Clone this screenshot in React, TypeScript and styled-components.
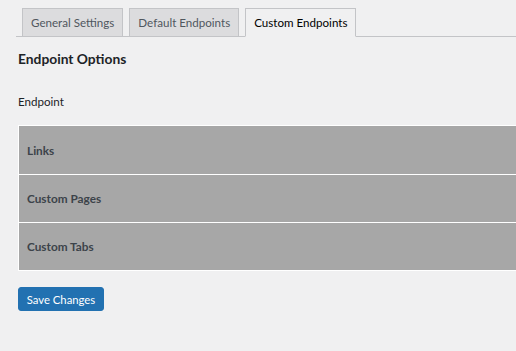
import React from "react";
import styled, { createGlobalStyle } from "styled-components";

const Global = createGlobalStyle`
  html, body { margin: 0; padding: 0; background: #f0f0f1; }
  body { font-family: "Lato", "Open Sans", sans-serif; color: #3c434a; font-size: 12px; overflow: hidden; }
`;

const Wrap = styled.div`
  padding: 8px 0 0 16px;
`;

const TabBar = styled.nav`
  display: flex;
  align-items: flex-end;
  gap: 6px;
  padding-left: 6px;
  border-bottom: 1px solid #c3c4c7;
  height: 28px;
`;

const Tab = styled.a<{ $active?: boolean }>`
  display: flex;
  align-items: center;
  box-sizing: border-box;
  height: ${(p) => (p.$active ? "29px" : "28px")};
  margin-bottom: ${(p) => (p.$active ? "-1px" : "0")};
  padding: 0 8px;
  border: 1px solid #c3c4c7;
  border-bottom: ${(p) => (p.$active ? "1px solid #f0f0f1" : "none")};
  background: ${(p) => (p.$active ? "#f0f0f1" : "#dcdcde")};
  color: ${(p) => (p.$active ? "#000" : "#50575e")};
  font-size: 11.6px;
  font-weight: 400;
  text-decoration: none;
  white-space: nowrap;
`;

const Content = styled.div`
  padding-left: 2px;
`;

const Heading = styled.h2`
  margin: 12px 0 0;
  font-size: 13.8px;
  font-weight: 700;
  color: #1d2327;
  line-height: 20px;
`;

const Label = styled.div`
  margin-top: 24px;
  font-size: 11.6px;
  color: #1d2327;
  line-height: 18px;
`;

const Table = styled.div`
  margin-top: 14px;
  border-top: 1px solid #fff;
  border-left: 1px solid #fff;
  display: flex;
  flex-direction: column;
`;

const Row = styled.div<{ $first?: boolean }>`
  height: ${(p) => (p.$first ? "48px" : "47px")};
  display: flex;
  align-items: center;
  padding-left: 8px;
  background: #a7a7a7;
  border-bottom: 1px solid #fff;
  font-size: 11.8px;
  font-weight: 700;
  color: #3c434a;
`;

const Button = styled.button`
  margin-top: 16px;
  height: 24px;
  width: 86px;
  padding: 0;
  border: 1px solid #2271b1;
  border-radius: 3px;
  background: #2271b1;
  color: #fff;
  font-family: "Lato", "Open Sans", sans-serif;
  font-size: 11.3px;
  font-weight: 400;
`;

export default function App() {
  return (
    <Wrap>
      <Global />
      <TabBar>
        <Tab href="#">General Settings</Tab>
        <Tab href="#">Default Endpoints</Tab>
        <Tab href="#" $active>Custom Endpoints</Tab>
      </TabBar>
      <Content>
        <Heading>Endpoint Options</Heading>
        <Label>Endpoint</Label>
        <Table>
          <Row $first>Links</Row>
          <Row>Custom Pages</Row>
          <Row>Custom Tabs</Row>
        </Table>
        <Button>Save Changes</Button>
      </Content>
    </Wrap>
  );
}
